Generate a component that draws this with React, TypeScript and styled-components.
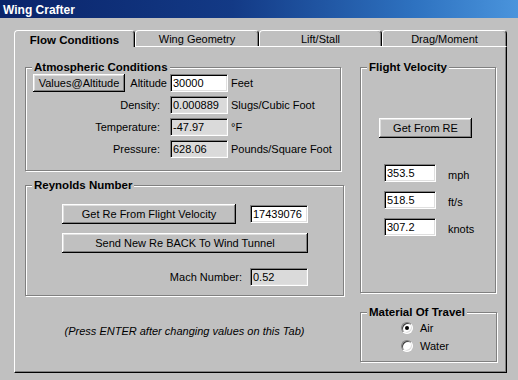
import React from 'react';
import styled, { createGlobalStyle } from 'styled-components';

const GlobalStyle = createGlobalStyle`
  html, body {
    margin: 0;
    padding: 0;
    background: #c0c0c0;
  }
  body {
    font-family: 'Liberation Sans', Arial, sans-serif;
    font-size: 11px;
    color: #000;
  }
  * {
    box-sizing: border-box;
  }
`;

const aTabs = ['Flow Conditions', 'Wing Geometry', 'Lift/Stall', 'Drag/Moment'];
const aTabWidths = [121, 124, 123, 125];

const aAtmo = [
  { label: 'Density:', value: '0.000889', unit: 'Slugs/Cubic Foot' },
  { label: 'Temperature:', value: '-47.97', unit: '°F' },
  { label: 'Pressure:', value: '628.06', unit: 'Pounds/Square Foot' },
];

const aVelocity = [
  { value: '353.5', unit: 'mph' },
  { value: '518.5', unit: 'ft/s' },
  { value: '307.2', unit: 'knots' },
];

const App = () => {
  return (
    <Window>
      <GlobalStyle />
      <TitleBar>Wing Crafter</TitleBar>

      <Body>
        <TabStrip>
          {aTabs.map((sTab, i) => (
            <Tab key={sTab} $w={aTabWidths[i]} $active={i === 0}>
              {sTab}
            </Tab>
          ))}
        </TabStrip>

        <Panel>
          <LeftCol>
            <Group $w={316} $h={104}>
              <GroupTitle>Atmospheric Conditions</GroupTitle>
              <AtmoGrid>
                <FirstCell>
                  <Button $w={92} $h={18}>Values@Altitude</Button>
                  <span>Altitude</span>
                </FirstCell>
                <Field $w={58} value='30000' readOnly />
                <Unit>Feet</Unit>

                {aAtmo.map((oRow) => (
                  <React.Fragment key={oRow.label}>
                    <RowLabel>{oRow.label}</RowLabel>
                    <Field $w={58} $ro value={oRow.value} readOnly />
                    <Unit>{oRow.unit}</Unit>
                  </React.Fragment>
                ))}
              </AtmoGrid>
            </Group>

            <Group $w={319} $h={111} $gap={14}>
              <GroupTitle>Reynolds Number</GroupTitle>
              <ReBody>
                <ReRow>
                  <Button $w={174} $h={20}>Get Re From Flight Velocity</Button>
                  <Field $w={58} value='17439076' readOnly />
                </ReRow>
                <SendButton $w={246} $h={20}>
                  Send New Re BACK To Wind Tunnel
                </SendButton>
                <MachRow>
                  <span>Mach Number:</span>
                  <Field $w={58} $ro value='0.52' readOnly />
                </MachRow>
              </ReBody>
            </Group>

            <Note>(Press ENTER after changing values on this Tab)</Note>
          </LeftCol>

          <RightCol>
            <Group $w={136} $h={226}>
              <GroupTitle>Flight Velocity</GroupTitle>
              <FlightBody>
                <Button $w={93} $h={20}>Get From RE</Button>
                <VelList>
                  {aVelocity.map((oVel) => (
                    <VelRow key={oVel.unit}>
                      <Field $w={52} value={oVel.value} readOnly />
                      <VelUnit>{oVel.unit}</VelUnit>
                    </VelRow>
                  ))}
                </VelList>
              </FlightBody>
            </Group>

            <Group $w={137} $h={50} $gap={19}>
              <GroupTitle>Material Of Travel</GroupTitle>
              <MatBody>
                <RadioRow>
                  <Radio $checked />
                  Air
                </RadioRow>
                <RadioRow>
                  <Radio />
                  Water
                </RadioRow>
              </MatBody>
            </Group>
          </RightCol>
        </Panel>
      </Body>
    </Window>
  );
};

const Window = styled.div`
  width: 518px;
  height: 380px;
  overflow: hidden;
  background: #c0c0c0;
`;

const TitleBar = styled.div`
  height: 18px;
  padding: 3px 0 0 3px;
  line-height: 14px;
  font-size: 12px;
  font-weight: 700;
  color: #ffffff;
  background: linear-gradient(90deg, #0a246a 0%, #133a86 45%, #2e72c0 80%, #4a94dc 100%);
`;

const Body = styled.div`
  padding: 12px 0 0 14px;
`;

const TabStrip = styled.div`
  display: flex;
  align-items: flex-end;
  height: 16px;
`;

const Tab = styled.div<{ $w: number; $active?: boolean }>`
  position: relative;
  z-index: ${(p) => (p.$active ? 1 : 0)};
  width: ${(p) => p.$w}px;
  height: ${(p) => (p.$active ? 17 : 16)}px;
  margin-bottom: ${(p) => (p.$active ? -1 : 0)}px;
  padding-top: ${(p) => (p.$active ? 1 : 0)}px;
  display: flex;
  align-items: center;
  justify-content: center;
  background: #c0c0c0;
  border: 1px solid;
  border-color: #ffffff #000000 transparent #ffffff;
  border-bottom: none;
  border-radius: 4px 4px 0 0;
  box-shadow: inset -1px 0 0 #808080;
  font-size: ${(p) => (p.$active ? '11.5px' : '11px')};
  font-weight: ${(p) => (p.$active ? 700 : 400)};
`;

const Panel = styled.div`
  display: flex;
  gap: 16px;
  width: 493px;
  height: 327px;
  padding: 20px 0 0 10px;
  border-top: 1px solid #ffffff;
  border-left: 1px solid #ffffff;
  border-right: 1px solid #000000;
  border-bottom: 1px solid #000000;
  box-shadow: inset -1px -1px 0 #808080;
`;

const LeftCol = styled.div`
  display: flex;
  flex-direction: column;
  width: 319px;
`;

const RightCol = styled.div`
  display: flex;
  flex-direction: column;
  width: 138px;
`;

const Group = styled.div<{ $w: number; $h: number; $gap?: number }>`
  position: relative;
  flex: none;
  width: ${(p) => p.$w}px;
  height: ${(p) => p.$h}px;
  margin-top: ${(p) => p.$gap || 0}px;
  border: 1px solid #808080;
  box-shadow:
    inset 1px 1px 0 #ffffff,
    1px 1px 0 #ffffff;
`;

const GroupTitle = styled.span`
  position: absolute;
  top: -8px;
  left: 6px;
  padding: 0 2px;
  line-height: 14px;
  font-size: 11.5px;
  font-weight: 700;
  background: #c0c0c0;
`;

const Button = styled.button<{ $w: number; $h: number }>`
  width: ${(p) => p.$w}px;
  height: ${(p) => p.$h}px;
  padding: 0;
  border: none;
  background: #c0c0c0;
  font-family: 'Liberation Sans', Arial, sans-serif;
  font-size: 11px;
  color: #000000;
  box-shadow:
    inset -1px -1px 0 #000000,
    inset 1px 1px 0 #ffffff,
    inset -2px -2px 0 #808080,
    inset 2px 2px 0 #dfdfdf;
`;

const Field = styled.input<{ $w: number; $ro?: boolean }>`
  width: ${(p) => p.$w}px;
  height: 18px;
  padding: 0 0 0 2px;
  border: 1px solid;
  border-color: #808080 #ffffff #ffffff #808080;
  box-shadow:
    inset 1px 1px 0 #000000,
    inset -1px -1px 0 #dfdfdf;
  background: ${(p) => (p.$ro ? '#dadada' : '#ffffff')};
  font-family: 'Liberation Sans', Arial, sans-serif;
  font-size: 11px;
  color: #000000;
  outline: none;
`;

const AtmoGrid = styled.div`
  display: grid;
  grid-template-columns: 137px 58px auto;
  grid-auto-rows: 18px;
  row-gap: 4px;
  align-items: center;
  padding: 6px 0 0 7px;
`;

const FirstCell = styled.div`
  display: flex;
  align-items: center;
  justify-content: space-between;
  padding-right: 3px;
`;

const RowLabel = styled.span`
  text-align: right;
  padding-right: 10px;
`;

const Unit = styled.span`
  padding-left: 3px;
  white-space: nowrap;
`;

const ReBody = styled.div`
  display: flex;
  flex-direction: column;
  width: 282px;
  padding: 18px 0 0 36px;
`;

const ReRow = styled.div`
  display: flex;
  align-items: center;
  justify-content: space-between;
`;

const SendButton = styled(Button)`
  margin-top: 9px;
`;

const MachRow = styled.div`
  display: flex;
  align-items: center;
  justify-content: flex-end;
  gap: 8px;
  margin-top: 15px;
`;

const Note = styled.div`
  margin-top: 29px;
  text-align: center;
  font-style: italic;
  line-height: 13px;
`;

const FlightBody = styled.div`
  display: flex;
  flex-direction: column;
  align-items: flex-start;
  padding: 50px 0 0 18px;
`;

const VelList = styled.div`
  display: flex;
  flex-direction: column;
  gap: 9px;
  margin-top: 26px;
  padding-left: 5px;
`;

const VelRow = styled.div`
  display: flex;
  align-items: center;
`;

const VelUnit = styled.span`
  margin-left: 12px;
  padding-top: 3px;
`;

const MatBody = styled.div`
  padding: 6px 0 0 40px;
`;

const RadioRow = styled.div`
  display: flex;
  align-items: center;
  gap: 7px;
  height: 18px;
`;

const Radio = styled.span<{ $checked?: boolean }>`
  position: relative;
  flex: none;
  width: 12px;
  height: 12px;
  border-radius: 50%;
  background: #ffffff;
  border: 1px solid;
  border-color: #808080 #ffffff #ffffff #808080;
  box-shadow:
    inset 1px 1px 0 #404040,
    inset -1px -1px 0 #dfdfdf;

  &::after {
    content: '';
    display: ${(p) => (p.$checked ? 'block' : 'none')};
    position: absolute;
    top: 3px;
    left: 3px;
    width: 4px;
    height: 4px;
    border-radius: 50%;
    background: #000000;
  }
`;

export default App;
